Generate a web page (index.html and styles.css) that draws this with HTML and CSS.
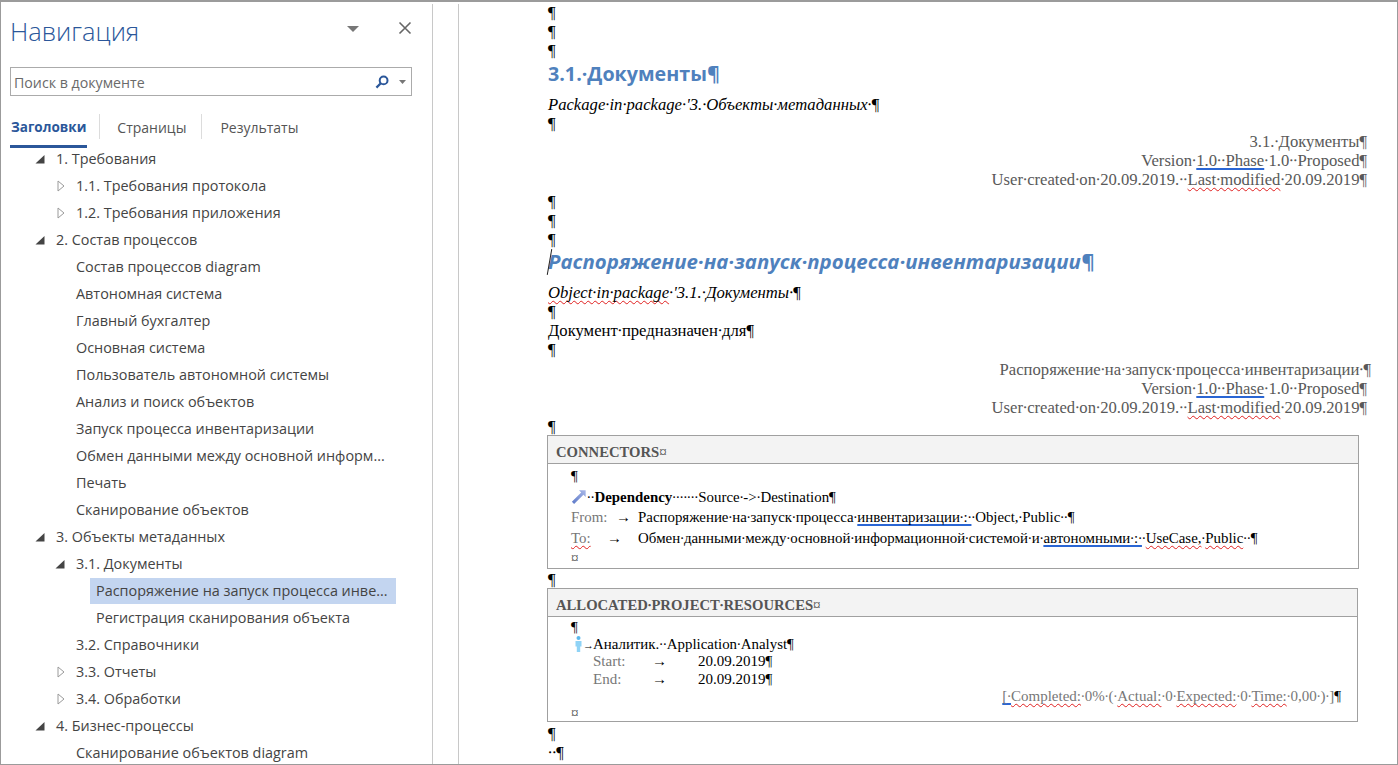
FILE: index.html
```html
<!DOCTYPE html>
<html>
<head>
    <title>Навигация</title>
    <link rel="stylesheet" href="styles.css">
</head>
<body>
<svg class="defs" width="0" height="0">
    <symbol id="tri-open" viewBox="0 0 10 10"><path d="M9.5 1V9.5H0.5Z" fill="#444"/></symbol>
    <symbol id="tri-closed" viewBox="0 0 10 12"><path d="M2 1L8 6L2 11Z" fill="#fff" stroke="#9a9a9a"/></symbol>
</svg>
<div class="window">
    <aside class="nav">
        <div class="nav-head">
            <div class="nav-title">Навигация</div>
            <svg class="nav-menu" width="14" height="8" viewBox="0 0 14 8"><path d="M1 1H13L7 7Z" fill="#777"/></svg>
            <svg class="nav-close" width="14" height="14" viewBox="0 0 14 14"><path d="M1.5 1.5L12.5 12.5M12.5 1.5L1.5 12.5" stroke="#666" stroke-width="1.6" fill="none"/></svg>
        </div>
        <div class="search">
            <span class="search-text">Поиск в документе</span>
            <svg class="search-icon" width="14" height="14" viewBox="0 0 14 14"><circle cx="8.6" cy="5.4" r="3.9" fill="none" stroke="#2b579a" stroke-width="2"/><path d="M5.8 8.2L1.4 12.6" stroke="#2b579a" stroke-width="2.2"/></svg>
            <svg class="search-drop" width="7" height="4" viewBox="0 0 7 4"><path d="M0 0H7L3.5 4Z" fill="#777"/></svg>
        </div>
        <div class="tabs">
            <div class="tab tab-active">Заголовки</div>
            <div class="tab">Страницы</div>
            <div class="tab">Результаты</div>
        </div>
        <ul class="tree">
            <li class="row lv1"><svg class="tri"><use href="#tri-open"/></svg>1. Требования</li>
            <li class="row lv2"><svg class="tri tri-c"><use href="#tri-closed"/></svg>1.1. Требования протокола</li>
            <li class="row lv2"><svg class="tri tri-c"><use href="#tri-closed"/></svg>1.2. Требования приложения</li>
            <li class="row lv1"><svg class="tri"><use href="#tri-open"/></svg>2. Состав процессов</li>
            <li class="row lv2">Состав процессов diagram</li>
            <li class="row lv2">Автономная система</li>
            <li class="row lv2">Главный бухгалтер</li>
            <li class="row lv2">Основная система</li>
            <li class="row lv2">Пользователь автономной системы</li>
            <li class="row lv2">Анализ и поиск объектов</li>
            <li class="row lv2">Запуск процесса инвентаризации</li>
            <li class="row lv2">Обмен данными между основной информ...</li>
            <li class="row lv2">Печать</li>
            <li class="row lv2">Сканирование объектов</li>
            <li class="row lv1"><svg class="tri"><use href="#tri-open"/></svg>3. Объекты метаданных</li>
            <li class="row lv2"><svg class="tri"><use href="#tri-open"/></svg>3.1. Документы</li>
            <li class="row lv3 selected"><span>Распоряжение на запуск процесса инве...</span></li>
            <li class="row lv3"><span>Регистрация сканирования объекта</span></li>
            <li class="row lv2">3.2. Справочники</li>
            <li class="row lv2"><svg class="tri tri-c"><use href="#tri-closed"/></svg>3.3. Отчеты</li>
            <li class="row lv2"><svg class="tri tri-c"><use href="#tri-closed"/></svg>3.4. Обработки</li>
            <li class="row lv1"><svg class="tri"><use href="#tri-open"/></svg>4. Бизнес-процессы</li>
            <li class="row lv2">Сканирование объектов diagram</li>
        </ul>
    </aside>
    <div class="gutter"></div>
    <main class="page">
        <p class="line">¶</p>
        <p class="line">¶</p>
        <p class="line">¶</p>
        <h2 class="h-pack">3.1.·Документы¶</h2>
        <p class="line em">Package∙in∙package∙'3.∙Объекты∙метаданных<span class="mark">∙¶</span></p>
        <p class="line">¶</p>
        <div class="meta">
            <p class="line">3.1.∙Документы¶</p>
            <p class="line">Version∙<span class="blue">1.0∙∙Phase</span>∙1.0∙∙Proposed¶</p>
            <p class="line">User∙created∙on∙20.09.2019.∙∙<span class="wavy">Last∙modified</span>∙20.09.2019¶</p>
        </div>
        <p class="line gap2">¶</p>
        <p class="line">¶</p>
        <p class="line">¶</p>
        <h3 class="h-obj"><span class="caret"></span>Распоряжение·на·запуск·процесса·инвентаризации¶</h3>
        <p class="line em"><span class="wavy">Object∙in∙package</span>∙'3.1.∙Документы<span class="mark">∙¶</span></p>
        <p class="line">¶</p>
        <p class="line">Документ∙предназначен∙для¶</p>
        <p class="line">¶</p>
        <div class="meta meta-2">
            <p class="line hang">Распоряжение∙на∙запуск∙процесса∙инвентаризации∙¶</p>
            <p class="line">Version∙<span class="blue">1.0∙∙Phase</span>∙1.0∙∙Proposed¶</p>
            <p class="line">User∙created∙on∙20.09.2019.∙∙<span class="wavy">Last∙modified</span>∙20.09.2019¶</p>
        </div>
        <p class="line">¶</p>

        <section class="box box-conn">
            <div class="box-head">CONNECTORS<span class="cell-mark">¤</span></div>
            <div class="box-body">
                <p class="tline">¶</p>
                <p class="tline dep">
                    <svg class="dep-icon" width="16" height="16" viewBox="0 0 18 18">
                        <defs><linearGradient id="dep-grad" x1="0" y1="1" x2="1" y2="0"><stop offset="0" stop-color="#5b78c8"/><stop offset="1" stop-color="#a9b8e8"/></linearGradient></defs>
                        <path d="M1 15.5L11.5 5L9 2.5H16.5V10L14 7.5L3.5 18Z" fill="url(#dep-grad)"/>
                    </svg>∙∙<b>Dependency</b>∙∙∙∙∙∙∙Source∙-&gt;∙Destination¶
                </p>
                <p class="tline tabbed from"><span class="label">From:</span><span class="arrow">→</span><span>Распоряжение∙на∙запуск∙процесса∙<span class="blue">инвентаризации∙:∙</span>∙Object,∙Public∙∙¶</span></p>
                <p class="tline tabbed to"><span class="label"><span class="wavy">To:</span></span><span class="arrow">→</span><span>Обмен∙данными∙между∙основной∙информационной∙системой∙и∙<span class="blue">автономными∙:∙</span>∙<span class="wavy">UseCase,</span>∙<span class="wavy">Public</span>∙∙¶</span></p>
                <p class="tline"><span class="cell-mark">¤</span></p>
            </div>
        </section>
        <p class="line sep-line">¶</p>
        <section class="box box-res">
            <div class="box-head">ALLOCATED∙PROJECT∙RESOURCES<span class="cell-mark">¤</span></div>
            <div class="box-body">
                <p class="sline">¶</p>
                <p class="sline res">
                    <svg class="res-icon" width="7" height="16" viewBox="0 0 7 16"><circle cx="3.5" cy="2" r="2" fill="#5cb8ec"/><path d="M0.5 5H6.5V10.5H5.2V16H1.8V10.5H0.5Z" fill="#8fd3f6"/></svg><span class="res-arrow">→</span>Аналитик.∙∙Application∙Analyst¶
                </p>
                <p class="sline dates"><span class="label">Start:</span><span class="arrow">→</span><span>20.09.2019¶</span></p>
                <p class="sline dates"><span class="label">End:</span><span class="arrow">→</span><span>20.09.2019¶</span></p>
                <p class="sline progress"><span class="blue">[∙</span><span class="wavy">Completed:</span>∙0%∙(∙<span class="wavy">Actual:</span>∙0∙<span class="wavy">Expected:</span>∙0∙<span class="wavy">Time:</span>∙0,00∙)∙]<span class="black">¶</span></p>
                <p class="sline"><span class="cell-mark">¤</span></p>
            </div>
        </section>
        <p class="line after">¶</p>
        <p class="line">∙∙¶</p>
    </main>
</div>
</body>
</html>
```
FILE: styles.css
```css
* {
    box-sizing: border-box;
}
html, body {
    margin: 0;
    height: 100%;
    overflow: hidden;
}
body {
    background: #fff;
}
p, h2, h3, ul {
    margin: 0;
    padding: 0;
}
.defs {
    display: block;
    height: 0;
}
.window {
    display: flex;
    width: 1398px;
    height: 765px;
    border: 1px solid #9b9b9b;
    border-top-width: 2px;
    overflow: hidden;
    background: #fff;
}

/* navigation pane */
.nav {
    width: 431px;
    flex: none;
    margin-top: 2px;
    font-family: "Open Sans", sans-serif;
    font-size: 14.4px;
    color: #444;
    overflow: hidden;
}
.nav-head {
    display: flex;
    align-items: center;
    height: 52px;
    padding: 0 20px 0 9px;
}
.nav-title {
    flex: 1;
    margin-top: 2px;
    font-size: 25.4px;
    font-weight: 300;
    color: #2b579a;
}
.nav-menu {
    margin-right: 38px;
    margin-top: -3px;
}
.nav-close {
    margin-top: -5px;
}
.search {
    display: flex;
    align-items: center;
    width: 402px;
    height: 29px;
    margin: 11px 0 0 9px;
    padding: 0 5px 0 3px;
    border: 1px solid #ababab;
}
.search-text {
    flex: 1;
    margin-top: 2px;
    font-size: 14.2px;
    color: #6a6a6a;
}
.search-icon {
    margin-right: 10px;
}
.tabs {
    display: flex;
    margin: 18px 0 0 9px;
    height: 32px;
    font-size: 14px;
}
.tab {
    position: relative;
    padding: 0 15px 0 18px;
    height: 25px;
    line-height: 27px;
    border-right: 1px solid #dcdcdc;
    color: #555;
}
.tab:last-child {
    border-right: none;
}
.tab-active {
    margin-right: 12px;
    padding: 0 1px;
    font-size: 13.5px;
    font-weight: 700;
    color: #2b579a;
    border-right: none;
    height: 34px;
    border-bottom: 3px solid #2b579a;
}
.tab-active::after {
    content: "";
    position: absolute;
    top: 0;
    right: -13px;
    height: 25px;
    border-right: 1px solid #dcdcdc;
}
.tree {
    list-style: none;
}
.row {
    position: relative;
    height: 27px;
    line-height: 26px;
    white-space: nowrap;
}
.lv1 {
    padding-left: 55px;
}
.lv2 {
    padding-left: 75px;
}
.lv3 {
    padding-left: 89px;
}
.lv3 span {
    display: block;
    width: 306px;
    padding-left: 6px;
}
.selected span {
    background: #c3d5f0;
}
.tri {
    position: absolute;
    top: 8px;
    width: 10px;
    height: 10px;
}
.lv1 .tri {
    left: 34px;
}
.lv2 .tri {
    left: 54px;
}
.tri-c {
    top: 7px;
    height: 12px;
}
.lv2 .tri-c {
    left: 55px;
}

/* divider between pane and page */
.gutter {
    width: 27px;
    flex: none;
    margin-top: 2px;
    border-left: 1px solid #c8c8c8;
    border-right: 1px solid #c8c8c8;
    background: #fff;
}

/* document page */
.page {
    flex: 1;
    padding: 1px 30px 0 89px;
    font-family: "Liberation Serif", serif;
    font-size: 16.65px;
    color: #000;
    overflow: hidden;
    white-space: nowrap;
}
.line {
    height: 19px;
    line-height: 19px;
}
.em {
    font-style: italic;
}
.mark {
    font-style: normal;
}
.h-pack {
    height: 35px;
    font-family: "Open Sans", sans-serif;
    font-size: 19.7px;
    line-height: 28px;
    font-weight: 700;
    color: #4f81bd;
}
.h-obj {
    position: relative;
    height: 34px;
    font-family: "Open Sans", sans-serif;
    font-size: 20.4px;
    line-height: 24px;
    font-weight: 700;
    font-style: italic;
    color: #4f81bd;
}
.caret {
    position: absolute;
    left: 1px;
    top: 0;
    width: 1px;
    height: 26px;
    background: #222;
    transform: rotate(10deg);
}
.meta {
    text-align: right;
    color: #595959;
    margin-top: -1px;
}
.meta-2 {
    margin-top: 1px;
}
.hang {
    margin-right: -4px;
}
.gap2 {
    margin-top: 3px;
}
.blue {
    text-decoration: underline solid #2a66d4 2px;
    text-underline-offset: 2px;
    text-decoration-skip-ink: none;
}
.wavy {
    text-decoration: underline wavy #e02020 1px;
    text-underline-offset: 2px;
    text-decoration-skip-ink: none;
}

.box {
    margin-left: -1px;
    border: 1px solid #a0a0a0;
    font-size: 14.9px;
}
.box-conn {
    width: 812px;
    height: 134px;
    margin-top: -1px;
}
.box-res {
    width: 811px;
    height: 134px;
    margin-top: -1px;
}
.box-head {
    height: 28px;
    padding-left: 8px;
    font-size: 14.67px;
    line-height: 32px;
    font-weight: 700;
    color: #555;
    background: #f3f3f3;
    border-bottom: 1px solid #a0a0a0;
}
.cell-mark {
    font-weight: 400;
    font-size: 15px;
    color: #444;
}
.box-body {
    padding: 2px 0 0 23px;
}
.tline {
    height: 20.5px;
    line-height: 20px;
}
.dep {
    position: relative;
}
.dep-icon {
    vertical-align: -2px;
}
.tabbed {
    display: grid;
}
.from {
    grid-template-columns: 45px 22px auto;
}
.to {
    grid-template-columns: 36px 31px auto;
}
.label {
    color: #777;
}
.sep-line {
    margin-top: 1px;
}
.sline {
    height: 17.2px;
    line-height: 17px;
}
.res {
    padding-left: 4px;
}
.res-icon {
    vertical-align: -3px;
}
.res-arrow {
    font-size: 11px;
    margin: 0 -1px 0 1px;
}
.dates {
    display: grid;
    grid-template-columns: 59px 46px auto;
    padding-left: 22px;
    font-size: 15px;
}
.progress {
    text-align: right;
    font-size: 15px;
    color: #777;
    padding-right: 16px;
}
.black {
    color: #000;
}
.after {
    margin-top: 2px;
}
```
